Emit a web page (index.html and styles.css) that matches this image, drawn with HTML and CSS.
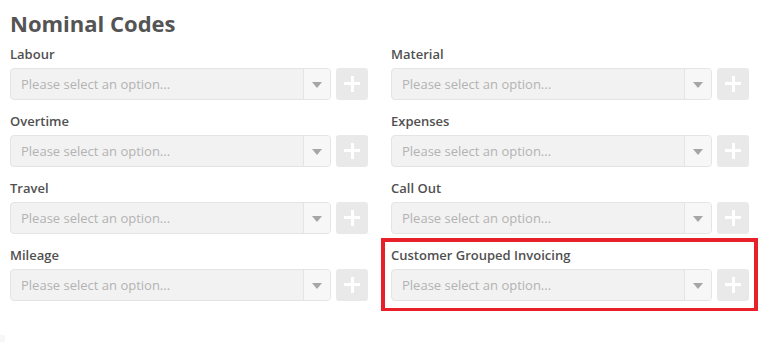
FILE: index.html
```html
<!DOCTYPE html>
<html>
<head>
<meta charset="utf-8">
<link rel="stylesheet" href="styles.css">
</head>
<body>
<div class="page">
  <h2 class="title">Nominal Codes</h2>
  <div class="grid">
    <div class="field">
      <div class="label">Labour</div>
      <div class="row"><div class="select"><span class="ph">Please select an option...</span><span class="arrow"></span></div><div class="add"></div></div>
    </div>
    <div class="field">
      <div class="label">Material</div>
      <div class="row"><div class="select"><span class="ph">Please select an option...</span><span class="arrow"></span></div><div class="add"></div></div>
    </div>
    <div class="field">
      <div class="label">Overtime</div>
      <div class="row"><div class="select"><span class="ph">Please select an option...</span><span class="arrow"></span></div><div class="add"></div></div>
    </div>
    <div class="field">
      <div class="label">Expenses</div>
      <div class="row"><div class="select"><span class="ph">Please select an option...</span><span class="arrow"></span></div><div class="add"></div></div>
    </div>
    <div class="field">
      <div class="label">Travel</div>
      <div class="row"><div class="select"><span class="ph">Please select an option...</span><span class="arrow"></span></div><div class="add"></div></div>
    </div>
    <div class="field">
      <div class="label">Call Out</div>
      <div class="row"><div class="select"><span class="ph">Please select an option...</span><span class="arrow"></span></div><div class="add"></div></div>
    </div>
    <div class="field">
      <div class="label">Mileage</div>
      <div class="row"><div class="select"><span class="ph">Please select an option...</span><span class="arrow"></span></div><div class="add"></div></div>
    </div>
    <div class="field highlighted">
      <div class="label">Customer Grouped Invoicing</div>
      <div class="row"><div class="select"><span class="ph">Please select an option...</span><span class="arrow"></span></div><div class="add"></div></div>
    </div>
  </div>
</div>
<div class="corner"></div>
</body>
</html>
```
FILE: styles.css
```css
html, body {
  margin: 0;
  padding: 0;
  background: #fff;
  font-family: "Open Sans", "Liberation Sans", sans-serif;
}
.page {
  padding: 8px 0 0 10px;
  width: 739px;
}
.title {
  margin: 0 0 5px 0;
  font-size: 22px;
  line-height: 30px;
  font-weight: 700;
  color: #545454;
}
.grid {
  display: grid;
  grid-template-columns: 358px 358px;
  column-gap: 23px;
}
.field {
  position: relative;
  height: 67px;
}
.label {
  font-size: 13px;
  line-height: 20px;
  font-weight: 600;
  color: #505050;
  padding-top: 1px;
  margin-bottom: 4px;
}
.row {
  display: flex;
  gap: 5px;
  height: 32px;
}
.select {
  flex: 1;
  display: flex;
  background: #f2f2f2;
  border: 1px solid #e4e4e4;
  border-radius: 4px;
  box-sizing: border-box;
  overflow: hidden;
}
.ph {
  flex: 1;
  padding-left: 10px;
  font-size: 13px;
  line-height: 30px;
  color: #b3b3b3;
}
.arrow {
  width: 26px;
  background: #f7f7f7;
  border-left: 1px solid #e4e4e4;
  position: relative;
}
.arrow::after {
  content: "";
  position: absolute;
  left: 8px;
  top: 13px;
  border-left: 5px solid transparent;
  border-right: 5px solid transparent;
  border-top: 6px solid #a6a6a6;
}
.add {
  width: 32px;
  background: #e9e9e9;
  border-radius: 3px;
  position: relative;
}
.add::before,
.add::after {
  content: "";
  position: absolute;
  background: #fff;
}
.add::before {
  left: 8px;
  top: 14px;
  width: 16px;
  height: 3px;
}
.add::after {
  left: 14.5px;
  top: 7.5px;
  width: 3px;
  height: 16px;
}
.highlighted::before {
  content: "";
  position: absolute;
  left: -10px;
  top: -6px;
  width: 377px;
  height: 74px;
  border: 4px solid #e8202a;
  box-sizing: border-box;
}
.corner {
  position: absolute;
  left: 0;
  top: 335px;
  width: 5px;
  height: 7px;
  background: #f7f7f7;
}
```
